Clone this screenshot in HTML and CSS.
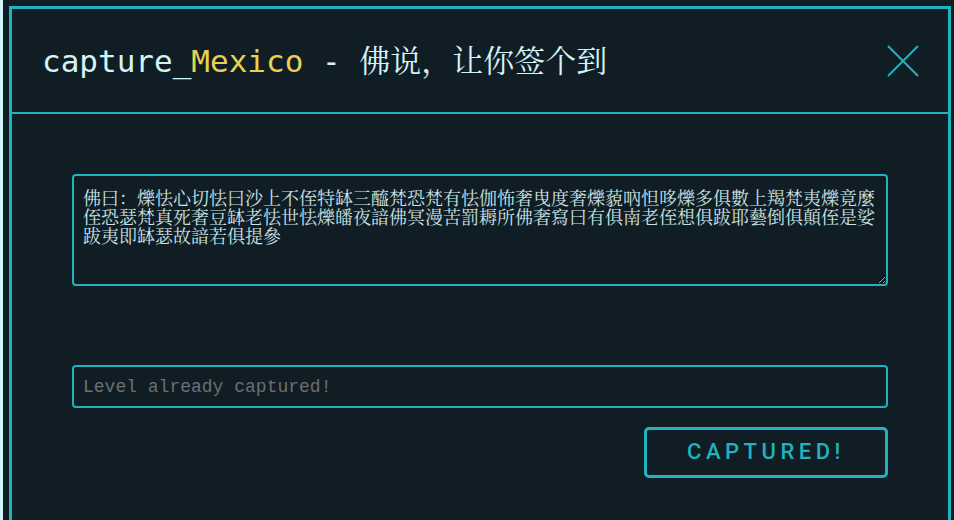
FILE: index.html
```html
<!DOCTYPE html>
<html lang="zh">
<head>
<meta charset="utf-8">
<title>capture_Mexico</title>
<link rel="stylesheet" href="styles.css">
</head>
<body>
<div class="page">
  <div class="edge"></div>
  <div class="modal">
    <header class="modal-head">
      <h1 class="title">capture_<span class="country">Mexico</span> - 佛说，让你签个到</h1>
      <button class="close" aria-label="close">
        <svg width="32" height="32" viewBox="0 0 32 32"><path d="M1 1 L31 31 M31 1 L1 31" stroke="#1fb3bd" stroke-width="2" fill="none"/></svg>
      </button>
    </header>
    <div class="modal-body">
      <textarea class="hint">佛曰：爍怯心切怯曰沙上不侄特缽三醯梵恐梵有怯伽怖奢曳度奢爍藐吶怛哆爍多俱數上羯梵夷爍竟麼侄恐瑟梵真死奢豆缽老怯世怯爍皤夜諳佛冥漫苦罰耨所佛奢寫曰有俱南老侄想俱跋耶藝倒俱顛侄是娑跋夷即缽瑟故諳若俱提參</textarea>
      <input class="flag" type="text" placeholder="Level already captured!">
      <div class="actions">
        <button class="submit">CAPTURED!</button>
      </div>
    </div>
  </div>
</div>
</body>
</html>
```

FILE: styles.css
```css
html, body {
  margin: 0;
  padding: 0;
  background: #111d24;
  height: 100%;
  overflow: hidden;
}
.page {
  display: flex;
  height: 100%;
}
.edge {
  width: 3px;
  flex: none;
  background: #d3f6f9;
}
.modal {
  margin: 6px 0 0 6px;
  width: 942px;
  box-sizing: border-box;
  border: 3px solid #1fb3bd;
  border-bottom: none;
  background: #111d24;
}
.modal-head {
  height: 103px;
  border-bottom: 2px solid #1fb3bd;
  display: flex;
  align-items: center;
  justify-content: space-between;
  padding: 0 29px 0 30px;
}
.title {
  margin: 0 0 4px 0;
  font-family: "DejaVu Sans Mono", "AR PL UMing CN", "Noto Serif CJK SC", "Noto Sans CJK SC", monospace;
  font-size: 31px;
  font-weight: normal;
  color: #d3f4f7;
}
.country {
  color: #e7d24e;
}
.close {
  background: none;
  border: none;
  padding: 0;
  width: 32px;
  height: 32px;
  display: block;
}
.close svg { display: block; }
.modal-body {
  padding: 60px 60px 0 60px;
  display: flex;
  flex-direction: column;
}
.hint {
  box-sizing: border-box;
  height: 112px;
  width: 100%;
  background: #111d24;
  border: 2px solid #1fb3bd;
  border-radius: 4px;
  padding: 13px 9px 8px 9px;
  margin: 0;
  color: #c9e4e6;
  font-family: "DejaVu Sans Mono", "AR PL UMing CN", "Noto Serif CJK SC", "Noto Sans CJK SC", monospace;
  font-size: 18px;
  line-height: 19px;
  outline: none;
}
.flag {
  box-sizing: border-box;
  margin-top: 79px;
  height: 43px;
  width: 100%;
  background: #111d24;
  border: 2px solid #1fb3bd;
  border-radius: 4px;
  padding: 0 9px;
  font-family: "Liberation Mono", monospace;
  font-size: 18px;
  color: #c9e4e6;
  outline: none;
}
.flag::placeholder {
  color: #6b6f72;
}
.actions {
  display: flex;
  justify-content: flex-end;
  margin-top: 19px;
}
.submit {
  box-sizing: border-box;
  width: 244px;
  height: 51px;
  background: #111d24;
  border: 3px solid #1fb3bd;
  border-radius: 5px;
  color: #1fb3bd;
  font-family: Roboto, sans-serif;
  font-weight: 500;
  font-size: 22px;
  letter-spacing: 4.5px;
  padding: 0 0 2px 0;
}
```
